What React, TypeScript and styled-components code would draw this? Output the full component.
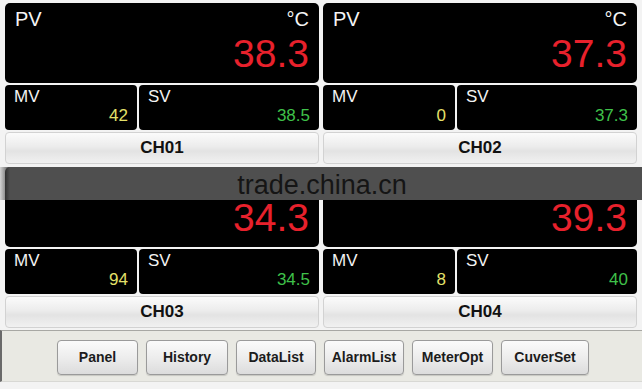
import React from 'react'
import styled, { createGlobalStyle } from 'styled-components'

type Channel = { name: string; pv: string; mv: string; sv: string; covered?: boolean }

const channels: Channel[] = [
  { name: 'CH01', pv: '38.3', mv: '42', sv: '38.5' },
  { name: 'CH02', pv: '37.3', mv: '0', sv: '37.3' },
  { name: 'CH03', pv: '34.3', mv: '94', sv: '34.5', covered: true },
  { name: 'CH04', pv: '39.3', mv: '8', sv: '40', covered: true },
]

const tabs = [
  { label: 'Panel', width: 81 },
  { label: 'History', width: 82 },
  { label: 'DataList', width: 80 },
  { label: 'AlarmList', width: 80 },
  { label: 'MeterOpt', width: 81 },
  { label: 'CuverSet', width: 88 },
]

const App = () => {
  return (
    <Screen>
      <GlobalStyle />
      <Grid>
        {channels.map((ch) => (
          <Panel key={ch.name}>
            <PvBox>
              <BoxHead>
                {/* the watermark band hides these labels on the lower row */}
                {!ch.covered && <Label>PV</Label>}
                {!ch.covered && <Label>°C</Label>}
              </BoxHead>
              <PvValue>{ch.pv}</PvValue>
            </PvBox>
            <SubRow>
              <SubBox>
                <SmallLabel>MV</SmallLabel>
                <SubValue color="#e4e06a">{ch.mv}</SubValue>
              </SubBox>
              <SubBox>
                <SmallLabel>SV</SmallLabel>
                <SubValue color="#3fc14a">{ch.sv}</SubValue>
              </SubBox>
            </SubRow>
            <ChannelButton>{ch.name}</ChannelButton>
          </Panel>
        ))}
      </Grid>
      <Toolbar>
        {tabs.map((t) => (
          <TabButton key={t.label} $width={t.width}>
            {t.label}
          </TabButton>
        ))}
      </Toolbar>
      <Watermark>trade.china.cn</Watermark>
    </Screen>
  )
}

const GlobalStyle = createGlobalStyle`
  html, body {
    margin: 0;
    padding: 0;
    background: #f3f3f3;
  }
  * {
    box-sizing: border-box;
  }
`

const Screen = styled.div`
  position: relative;
  width: 642px;
  height: 389px;
  overflow: hidden;
  background: #f3f3f3;
  font-family: 'Liberation Sans', Arial, sans-serif;
`

const Grid = styled.div`
  display: grid;
  grid-template-columns: 314px 314px;
  column-gap: 4px;
  row-gap: 3px;
  padding: 3px 5px 0 5px;
`

const Panel = styled.div`
  display: flex;
  flex-direction: column;
  gap: 2px;
`

const PvBox = styled.div`
  height: 80px;
  background: #000;
  border-radius: 5px;
  padding: 5px 10px 0 10px;
  display: flex;
  flex-direction: column;
`

const BoxHead = styled.div`
  height: 22px;
  display: flex;
  justify-content: space-between;
  align-items: flex-start;
`

const Label = styled.span`
  color: #f4f4f4;
  font-size: 20px;
  line-height: 22px;
`

const PvValue = styled.div`
  color: #e8212c;
  font-size: 39px;
  line-height: 40px;
  text-align: right;
  margin-top: 4px;
`

const SubRow = styled.div`
  display: grid;
  grid-template-columns: 132px 1fr;
  gap: 2px;
`

const SubBox = styled.div`
  height: 45px;
  background: #000;
  border-radius: 4px;
  padding: 3px 9px 0 9px;
  display: flex;
  flex-direction: column;
`

const SmallLabel = styled.span`
  color: #f2f2f2;
  font-size: 17px;
  line-height: 18px;
`

const SubValue = styled.span<{ color: string }>`
  color: ${(p) => p.color};
  font-size: 17px;
  line-height: 20px;
  text-align: right;
`

const ChannelButton = styled.div`
  height: 32px;
  border: 1px solid #d2d2d2;
  border-radius: 4px;
  background: linear-gradient(#fbfbfb 0%, #ececec 45%, #e3e3e3 60%, #f1f1f1 100%);
  display: flex;
  align-items: center;
  justify-content: center;
  font-weight: bold;
  font-size: 17px;
  color: #111;
`

const Toolbar = styled.div`
  margin-top: 2px;
  height: 52px;
  border-top: 1px solid #a8a8a4;
  border-left: 2px solid #6a6a6a;
  border-bottom: 1px solid #d8d8d4;
  background: #e9e9e3;
  display: flex;
  align-items: center;
  gap: 8px;
  padding: 0 0 6px 55px;
`

const TabButton = styled.button<{ $width: number }>`
  width: ${(p) => p.$width}px;
  height: 35px;
  margin-top: 8px;
  border: 1px solid #9a9a9a;
  border-radius: 4px;
  background: linear-gradient(#fafafa 0%, #ededed 50%, #dcdcdc 100%);
  box-shadow: 0 1px 1px rgba(0, 0, 0, 0.15);
  font-family: 'Liberation Sans', Arial, sans-serif;
  font-weight: bold;
  font-size: 14px;
  color: #1c1c1c;
  padding: 0;
`

const Watermark = styled.div`
  position: absolute;
  left: 0;
  right: 0;
  top: 167px;
  height: 33px;
  background: linear-gradient(90deg, rgba(80, 80, 80, 0.2) 0px, #4f4f4f 10px);
  color: #151515;
  font-size: 27px;
  line-height: 36px;
  text-align: center;
  padding-left: 2px;
`

export default App
